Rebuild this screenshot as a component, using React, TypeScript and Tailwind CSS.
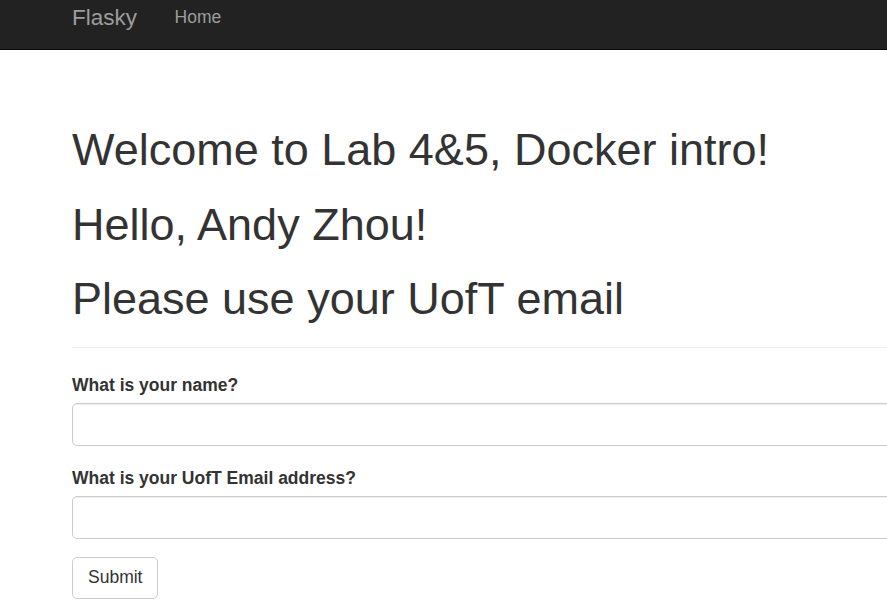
export default function App() {
  const font = { fontFamily: '"Liberation Sans", Arial, Helvetica, sans-serif' };
  return (
    <div className="w-[887px] h-[615px] overflow-hidden bg-white text-[#333]" style={font}>
      <nav className="h-[50px] bg-[#222] border-b border-[#080808] flex items-start pl-[72px]">
        <span className="pt-[5px] text-[22.5px] leading-[25px] text-[#9d9d9d]">Flasky</span>
        <span className="pt-[5px] ml-[37.5px] text-[17.5px] leading-[25px] text-[#9d9d9d]">Home</span>
      </nav>
      <main className="pl-[72px] w-[1500px]">
        <div className="pt-[75px] pb-[23px] border-b border-[#eee] flex flex-col gap-[25px]">
          <h1 className="text-[45px] leading-[49.5px] font-normal">Welcome to Lab 4&amp;5, Docker intro!</h1>
          <h1 className="text-[45px] leading-[49.5px] font-normal">Hello, Andy Zhou!</h1>
          <h1 className="text-[45px] leading-[49.5px] font-normal">Please use your UofT email</h1>
        </div>
        <form className="mt-[25px]" onSubmit={(e) => e.preventDefault()}>
          <div className="mb-[20px]">
            <label className="block text-[17.5px] leading-[25px] font-bold mb-[5px]">What is your name?</label>
            <input
              type="text"
              className="block w-full h-[43px] border border-[#ccc] rounded-[5px] shadow-[inset_0_1px_1px_rgba(0,0,0,0.075)] bg-white outline-none"
            />
          </div>
          <div className="mb-[18px]">
            <label className="block text-[17.5px] leading-[25px] font-bold mb-[5px]">What is your UofT Email address?</label>
            <input
              type="text"
              className="block w-full h-[43px] border border-[#ccc] rounded-[5px] shadow-[inset_0_1px_1px_rgba(0,0,0,0.075)] bg-white outline-none"
            />
          </div>
          <button
            type="submit"
            className="px-[15px] py-[7.5px] text-[17.5px] leading-[25px] border border-[#ccc] rounded-[5px] bg-white text-[#333]"
          >
            Submit
          </button>
        </form>
      </main>
    </div>
  );
}
